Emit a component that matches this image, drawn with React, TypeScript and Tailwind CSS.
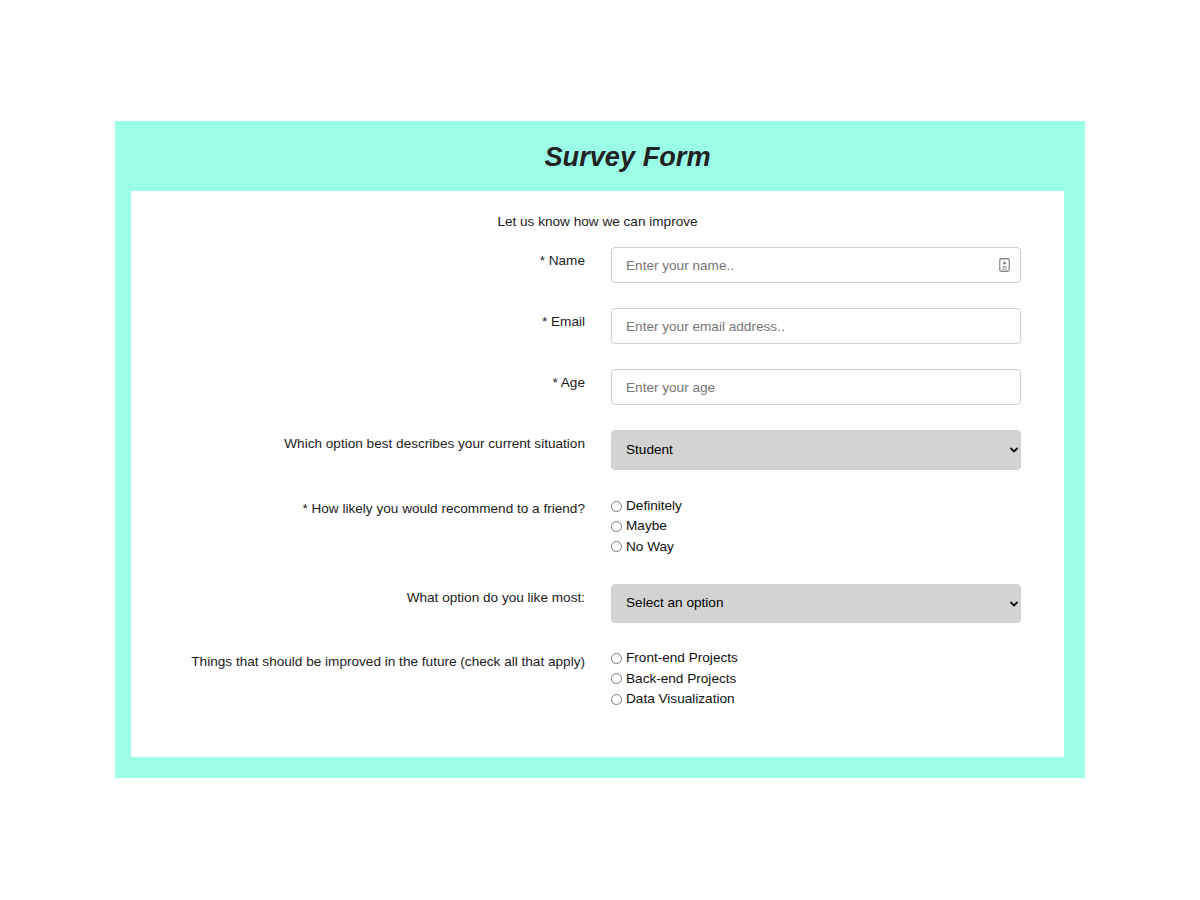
import React from 'react';

function ContactIcon() {
    return (
        <svg width="11" height="14" viewBox="0 0 11 14" className="absolute right-[11px] top-1/2 -translate-y-1/2">
            <rect x="0.75" y="0.75" width="9.5" height="12.5" rx="1.5" fill="none" stroke="#8a8a8a" strokeWidth="1.3" />
            <circle cx="5.5" cy="5" r="1.5" fill="#8a8a8a" />
            <path d="M3 9.5 C3 7.8 8 7.8 8 9.5 Z" fill="#8a8a8a" />
            <rect x="3" y="10.6" width="5" height="0.9" fill="#8a8a8a" />
        </svg>
    );
}

function Chevron() {
    return (
        <svg width="8" height="6" viewBox="0 0 8 6" className="pointer-events-none absolute right-[3px] top-1/2 -translate-y-1/2">
            <path d="M1 1.5 L4 4.5 L7 1.5" fill="none" stroke="#111" strokeWidth="1.8" strokeLinecap="round" strokeLinejoin="round" />
        </svg>
    );
}

function Row({ label, children }: { label: string; children: React.ReactNode }) {
    return (
        <div className="flex items-start">
            <label className="w-[454px] shrink-0 pt-[4px] text-right leading-[20px] text-[#1c1c1c]">{label}</label>
            <div className="ml-[26px] w-[410px]">{children}</div>
        </div>
    );
}

function TextInput({ placeholder, icon }: { placeholder: string; icon?: boolean }) {
    return (
        <div className="relative">
            <input
                type="text"
                placeholder={placeholder}
                className="h-[36px] w-full rounded-[4px] border border-[#cfcfcf] bg-white pl-[14px] pr-8 text-[13.6px] text-[#222] placeholder-[#767676] outline-none"
            />
            {icon && <ContactIcon />}
        </div>
    );
}

function Select({ value, options, h }: { value: string; options: string[]; h: string }) {
    return (
        <div className={`relative ${h}`}>
            <select
                defaultValue={value}
                className="h-full w-full appearance-none rounded-[4px] border border-[#d0d0d0] bg-[#d3d3d3] pl-[14px] text-[13.6px] text-black outline-none"
            >
                {options.map((o) => (
                    <option key={o}>{o}</option>
                ))}
            </select>
            <Chevron />
        </div>
    );
}

function Choice({ name, text }: { name: string; text: string }) {
    return (
        <label className="flex h-[20.4px] items-center text-[#111]">
            <input
                type="radio"
                name={name}
                className="h-[11px] w-[11px] appearance-none rounded-full border border-[#7a7a7a] bg-white"
            />
            <span className="ml-[4px]">{text}</span>
        </label>
    );
}

export default function App() {
    return (
        <div className="min-h-[900px] w-full bg-white pt-[121px]" style={{ fontFamily: '"Liberation Sans", Arial, Helvetica, sans-serif' }}>
            <div className="mx-auto w-[970px] bg-[#9bffe8]">
                <header className="flex h-[70px] items-center justify-center pl-[55px] pt-[3px]">
                    <h1 className="text-[27.2px] font-bold italic text-[#222]">Survey Form</h1>
                </header>
                <form className="ml-[16px] mr-[21px] bg-white pb-[48px] pt-[21px] text-[13.6px]">
                    <p className="mb-[15px] text-center leading-[20px] text-[#1c1c1c]">Let us know how we can improve</p>
                    <div className="flex flex-col gap-[25px]">
                        <Row label="* Name">
                            <TextInput placeholder="Enter your name.." icon />
                        </Row>
                        <Row label="* Email">
                            <TextInput placeholder="Enter your email address.." />
                        </Row>
                        <Row label="* Age">
                            <TextInput placeholder="Enter your age" />
                        </Row>
                        <Row label="Which option best describes your current situation">
                            <Select value="Student" options={['Student', 'Full Time Job', 'Full Time Learner', 'Prefer not to say', 'Other']} h="h-[40px]" />
                        </Row>
                        <Row label="* How likely you would recommend to a friend?">
                            <div className="flex flex-col pb-[2px] pt-[1px]">
                                <Choice name="recommend" text="Definitely" />
                                <Choice name="recommend" text="Maybe" />
                                <Choice name="recommend" text="No Way" />
                            </div>
                        </Row>
                        <Row label="What option do you like most:">
                            <Select value="Select an option" options={['Select an option', 'Challenges', 'Projects', 'Community', 'Open Source']} h="h-[39px]" />
                        </Row>
                        <Row label="Things that should be improved in the future (check all that apply)">
                            <div className="flex flex-col">
                                <Choice name="improve1" text="Front-end Projects" />
                                <Choice name="improve2" text="Back-end Projects" />
                                <Choice name="improve3" text="Data Visualization" />
                            </div>
                        </Row>
                    </div>
                </form>
                <div className="h-[21px]" />
            </div>
        </div>
    );
}
